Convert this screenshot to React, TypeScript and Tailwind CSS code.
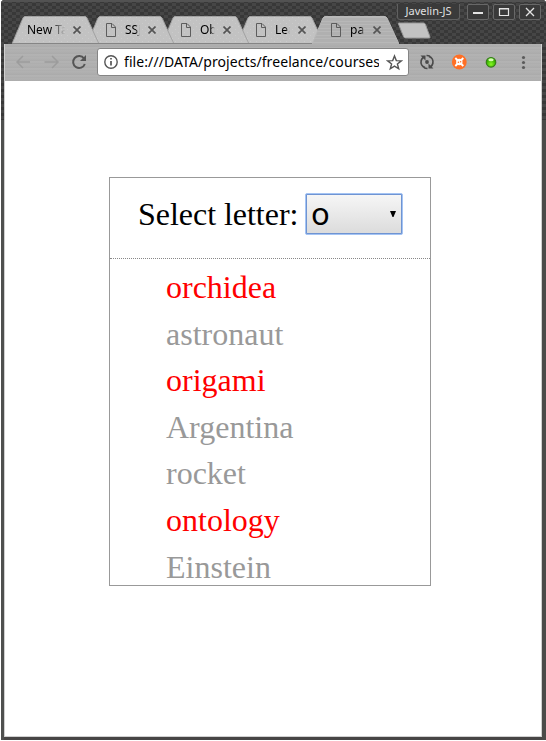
import React from "react";

const tabs = [
  { title: "New Ta", icon: false, layer: "z-[4]" },
  { title: "SSJ", icon: true, layer: "z-[3]" },
  { title: "Obj", icon: true, layer: "z-[2]" },
  { title: "Lea", icon: true, layer: "z-[1]" },
  { title: "pa", icon: true, layer: "z-10", active: true },
];

const words = ["orchidea", "astronaut", "origami", "Argentina", "rocket", "ontology", "Einstein"];

const weave =
  "bg-[#414141] bg-[repeating-conic-gradient(#383838_0_25%,#464646_0_50%)] bg-[length:8px_6px]";
const brushed =
  "bg-[repeating-linear-gradient(180deg,#acacac_0px,#b3b3b3_1px,#a8a8a8_2px,#b6b6b6_4px,#adadad_5px,#b2b2b2_7px)]";

function PageIcon() {
  return (
    <svg width="10" height="14" viewBox="0 0 10 14" fill="none" stroke="#5d5d5d" className="shrink-0">
      <path d="M.5.5H6L9.5 4v9.500H.5z M5.500.5v4h4" />
    </svg>
  );
}

function Close() {
  return (
    <svg width="8" height="8" viewBox="0 0 8 8" stroke="#555" strokeWidth="1.700" className="shrink-0">
      <path d="M.5.5l7 7M7.500.5l-7 7" />
    </svg>
  );
}

function Tab({ title, icon, layer, active }: { title: string; icon: boolean; layer: string; active?: boolean }) {
  return (
    <div className={`relative -mr-3 h-7 w-[87px] shrink-0 ${layer}`}>
      <svg className="absolute inset-0" width="87" height="28" viewBox="0 0 87 28">
        <defs>
          <pattern id="dots" width="6" height="6" patternUnits="userSpaceOnUse">
            <rect width="6" height="6" fill="#c2c2c2" />
            <path d="M1 1h1v1H1zM4 4h1v1H4z" fill="#cbcbcb" />
          </pattern>
          <pattern id="lines" width="20" height="7" patternUnits="userSpaceOnUse">
            <rect width="20" height="7" fill="#b0b0b0" />
            <path d="M0 1.500h20M0 5.500h20" stroke="#b8b8b8" />
          </pattern>
        </defs>
        <path d="M0 28L11 2Q12 0 14 0H72Q74 0 75 2L87 28z" fill={active ? "url(#lines)" : "url(#dots)"} />
        <path d="M0 28L11 2Q12 .5 14 .5H72Q74 .5 75 2L87 28" fill="none" stroke={active ? "#b9b9b9" : "#a2a2a2"} />
        {!active && <path d="M0 27.500H87" stroke="#858585" />}
      </svg>
      <div
        className={`relative flex h-7 items-center pr-[18px] font-['Noto_Sans',sans-serif] text-xs text-black ${icon ? "pl-[19px]" : "pl-[15px]"}`}
      >
        {icon && <PageIcon />}
        <span
          className={`h-5 overflow-hidden whitespace-nowrap leading-5 ${icon ? "ml-[9px] w-[15px] [mask-image:linear-gradient(90deg,#000_70%,transparent_100%)]" : "w-[39px] [mask-image:linear-gradient(90deg,#000_62%,transparent_98%)]"}`}
        >
          {title}
        </span>
        <span className="ml-auto">
          <Close />
        </span>
      </div>
    </div>
  );
}

function WindowButton({ children }: { children: React.ReactNode }) {
  return (
    <div className="flex h-4 w-[22px] items-center justify-center rounded-[2px] border border-[#686868] bg-[#3a3a3a]">
      <svg width="12" height="10" viewBox="0 0 12 10" fill="none" stroke="#e4e4e4">
        {children}
      </svg>
    </div>
  );
}

function TitleBar() {
  return (
    <header className={`relative h-11 w-full overflow-hidden ${weave}`}>
      <div className="absolute inset-x-0 top-0 h-[2px] bg-[#525252]" />
      <div className="absolute right-[5px] top-1 flex items-center gap-1">
        <div className="mr-[3px] flex h-4 w-[63px] items-center justify-center rounded-b-[3px] border border-t-0 border-[#606060] bg-[#3a3a3a] font-['Noto_Sans',sans-serif] text-[11px] text-[#e0e0e0]">
          Javelin-JS
        </div>
        <div className="flex gap-1">
          <WindowButton>
            <path d="M1 6h10" strokeWidth="2" />
          </WindowButton>
          <WindowButton>
            <path d="M1.500 1.500h9v7h-9zM1 2h10" strokeWidth="1.200" />
          </WindowButton>
          <WindowButton>
            <path d="M2 1l8 8M10 1L2 9" strokeWidth="1.300" />
          </WindowButton>
        </div>
      </div>
      <nav className="flex pl-3 pt-4">
        {tabs.map((t) => (
          <Tab key={t.title} {...t} />
        ))}
        <svg className="ml-[9px] mt-[6px]" width="35" height="18" viewBox="0 0 35 18">
          <path d="M3 1H27.500Q29 1 29.500 2.500L34 15Q34.500 16 33 16H9.500Q8 16 7.500 14.500L2.500 2Q2 1 3 1z" fill="#c2c2c2" stroke="#999" />
        </svg>
      </nav>
    </header>
  );
}

function Toolbar() {
  return (
    <div className={`flex h-[37px] items-center pb-px ${brushed}`}>
      <svg width="93" height="36" viewBox="5 44 93 36" fill="none" className="mr-[-1px] shrink-0">
        <path d="M30 62H17M23 56l-6 6 6 6M44.500 62H58M52 56l6 6-6 6" stroke="#9c9c9c" strokeWidth="1.500" />
        <path d="M84 58.500A6 6 0 1 0 84.800 64" stroke="#555" strokeWidth="2" />
        <path d="M86 55v6h-6z" fill="#555" />
      </svg>
      <div className="flex h-7 w-[312px] shrink-0 items-center overflow-hidden rounded-[3px] border border-[#858585] bg-white">
        <svg width="26" height="26" viewBox="98 49 26 26" className="shrink-0" fill="none" stroke="#555">
          <circle cx="111" cy="62" r="6.200" strokeWidth="1.400" />
          <path d="M111 61v4.500M111 58v1.600" strokeWidth="1.700" />
        </svg>
        <span className="w-[255px] overflow-hidden whitespace-nowrap font-['Noto_Sans',sans-serif] text-[14px] leading-6 tracking-[0.080px] text-black">
          file:///DATA/projects/freelance/courses
        </span>
        <svg className="ml-[7px] shrink-0" width="17" height="17" viewBox="0 0 17 17" fill="none" stroke="#555" strokeWidth="1.400">
          <path d="M8.500 2l1.800 4.600 5 .3-3.900 3.100 1.300 4.800-4.200-2.700-4.200 2.700 1.300-4.800L1.700 6.900l5-.3z" />
        </svg>
      </div>
      <svg width="132" height="36" viewBox="409 44 132 36" fill="none" className="shrink-0">
        <circle cx="427" cy="62" r="1.900" fill="#4a4a4a" />
        <path d="M425 67.600A6 6 0 0 1 421.200 60.500Q421.700 58.500 423.500 57.200M429 56.400A6 6 0 0 1 432.800 63.500Q432.300 65.500 430.500 66.800" stroke="#4a4a4a" strokeWidth="1.700" />
        <path d="M420.500 55.500h5v5zM433.500 68.500h-5v-5z" fill="#4a4a4a" />
        <path d="M426.500 55.600A6.400 6.400 0 0 1 430 56.400M427.500 68.400A6.400 6.400 0 0 1 424 67.600" stroke="#4a4a4a" strokeWidth="1.500" />
        <circle cx="459.300" cy="62" r="7.400" fill="#ff6f25" />
        <path d="M455.300 58l8 8M463.300 58l-8 8" stroke="#fff" strokeWidth="1.900" />
        <circle cx="459.300" cy="62" r="3.200" fill="#fff" />
        <circle cx="458.400" cy="62.300" r=".8" fill="#ff6f25" />
        <circle cx="460.600" cy="61.700" r=".8" fill="#ff6f25" />
        <defs>
          <radialGradient id="green" cy=".7">
            <stop stopColor="#87fa24" />
            <stop offset="1" stopColor="#36ad00" />
          </radialGradient>
        </defs>
        <circle cx="491" cy="62.300" r="4.800" fill="url(#green)" stroke="#357c18" strokeWidth="1.100" />
        <ellipse cx="491" cy="59.800" rx="2.700" ry="1.500" fill="#d3ffb0" />
        <g fill="#5b5b5b">
          <circle cx="523.500" cy="57.500" r="1.600" />
          <circle cx="523.500" cy="62.500" r="1.600" />
          <circle cx="523.500" cy="67.500" r="1.600" />
        </g>
      </svg>
    </div>
  );
}

function LetterCard() {
  return (
    <section className="ml-[104px] mt-[96px] h-[409px] w-[322px] border border-[#999] font-['Liberation_Serif',serif] text-[32px]">
      <div className="flex h-[81px] items-start border-b border-dotted border-[#888] pl-7 pt-[15px]">
        <label className="mt-[3px] w-[167px] whitespace-pre leading-[37px] tracking-[-0.030px] text-black">Select letter:</label>
        <div
          role="combobox"
          className="flex h-[42px] w-[98px] items-center justify-between rounded-[2px] border border-[#a4c4f4] bg-[#6f94d2] p-px"
        >
          <div className="flex h-full w-full items-center justify-between bg-linear-to-b from-[#f6f6f6] to-[#dcdcdc] pl-[4px] pr-[5px] font-['Noto_Sans',sans-serif] text-[31px] text-black">
            <span className="-mt-[3px] leading-[38px]">o</span>
            <svg className="-mt-[1px]" width="6" height="6" viewBox="0 0 6 6">
              <path d="M0 0h6L3.500 6h-1z" fill="#000" />
            </svg>
          </div>
        </div>
      </div>
      <ul className="pl-14 pt-[5px]">
        {words.map((word) => (
          <li key={word} className={`h-[46.600px] leading-[46px] ${word.startsWith("o") ? "text-[#ff0000]" : "text-[#999]"}`}>
            {word}
          </li>
        ))}
      </ul>
    </section>
  );
}

export default function App() {
  return (
    <div className="flex h-[741px] w-[546px] flex-col overflow-hidden bg-white pb-px pl-px">
      <div className="flex h-[740px] w-[545px] flex-col overflow-hidden rounded-t-[4px] bg-[#474545]">
        <div className="-ml-px w-[546px]">
          <TitleBar />
        </div>
        <div className="flex h-[696px]">
          <div className="w-[3px] bg-[#4f504f]">
            <div className={`h-[76px] ${weave}`} />
          </div>
          <div className="h-[693px] w-[538px] border-x border-b border-[#d0d0d0] bg-white">
            <Toolbar />
            <LetterCard />
          </div>
          <div className="w-1 bg-[#4b4b49]">
            <div className={`h-[76px] ${weave}`} />
          </div>
        </div>
      </div>
    </div>
  );
}
